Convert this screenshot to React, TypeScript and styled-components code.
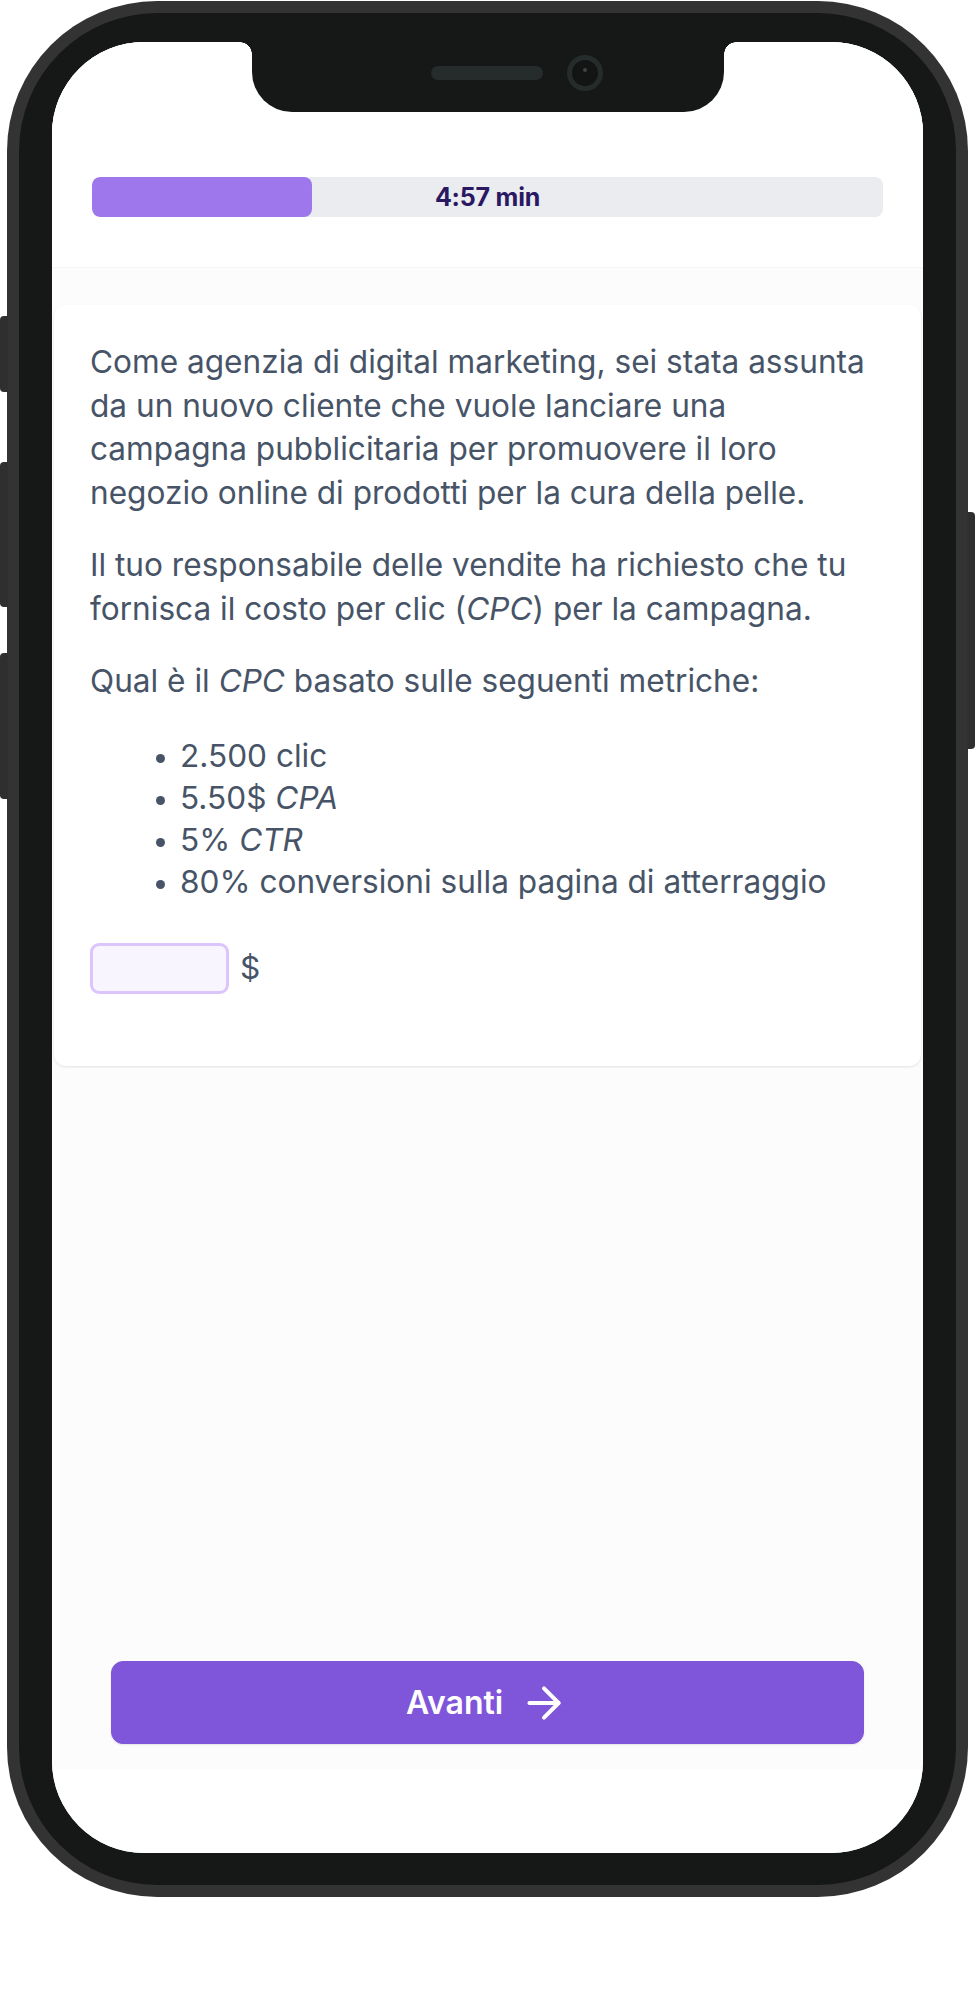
import React from 'react'
import styled, { createGlobalStyle } from 'styled-components'
import { ArrowRight } from 'lucide-react'

const GlobalStyle = createGlobalStyle`
  html, body {
    margin: 0;
    padding: 0;
    background: #ffffff;
  }
  body {
    font-family: Inter, 'Noto Sans', sans-serif;
    -webkit-font-smoothing: antialiased;
  }
  * {
    box-sizing: border-box;
  }
`

const metrics = [
  { value: '2.500 clic' },
  { value: '5.50$ ', unit: 'CPA' },
  { value: '5% ', unit: 'CTR' },
  { value: '80% conversioni sulla pagina di atterraggio' },
]

const elapsed = 0.278

const App = () => {
  return (
    <Stage>
      <GlobalStyle />
      <Phone>
        <SideButton side="left" top={316} length={76} />
        <SideButton side="left" top={462} length={145} />
        <SideButton side="left" top={653} length={146} />
        <SideButton side="right" top={512} length={237} />
        <Bezel>
          <Screen>
            <Notch>
              <Speaker />
              <Camera>
                <Lens />
              </Camera>
            </Notch>
            <AppView>
              <Header>
                <Progress>
                  <ProgressFill style={{ width: `${elapsed * 100}%` }} />
                  <ProgressLabel>4:57 min</ProgressLabel>
                </Progress>
              </Header>
              <Main>
                <Card>
                  <Paragraph>
                    Come agenzia di digital marketing, sei stata assunta da un
                    nuovo cliente che vuole lanciare una campagna pubblicitaria
                    per promuovere il loro negozio online di prodotti per la
                    cura della pelle.
                  </Paragraph>
                  <Paragraph>
                    Il tuo responsabile delle vendite ha richiesto che tu
                    fornisca il costo per clic (<em>CPC</em>) per la campagna.
                  </Paragraph>
                  <Paragraph $last>
                    Qual è il <em>CPC</em> basato sulle seguenti metriche:
                  </Paragraph>
                  <Metrics>
                    {metrics.map((m) => (
                      <li key={m.value}>
                        {m.value}
                        {m.unit && <em>{m.unit}</em>}
                      </li>
                    ))}
                  </Metrics>
                  <AnswerRow>
                    <AnswerInput type="text" aria-label="CPC" />
                    <Currency>$</Currency>
                  </AnswerRow>
                </Card>
              </Main>
              <Footer>
                <NextButton type="button">
                  Avanti
                  <ArrowRight size={50} strokeWidth={1.9} />
                </NextButton>
              </Footer>
            </AppView>
            <HomeArea />
          </Screen>
        </Bezel>
      </Phone>
    </Stage>
  )
}

export default App

const Stage = styled.div`
  width: 976px;
  height: 2004px;
  padding: 1px 0 0 7px;
  background: #ffffff;
`

const Phone = styled.div`
  position: relative;
  width: 961px;
  height: 1896px;
  padding: 12px;
  border-radius: 150px;
  background: #333333;
`

const SideButton = styled.div<{ side: 'left' | 'right'; top: number; length: number }>`
  position: absolute;
  top: ${({ top }) => top - 1}px;
  ${({ side }) => (side === 'left' ? 'left: -7px;' : 'right: -7px;')}
  width: 8px;
  height: ${({ length }) => length}px;
  border-radius: ${({ side }) => (side === 'left' ? '4px 0 0 4px' : '0 4px 4px 0')};
  background: #2f2f2f;
`

const Bezel = styled.div`
  height: 100%;
  padding: 29px 33px 32px;
  border-radius: 138px;
  background: #161817;
`

const Screen = styled.div`
  position: relative;
  display: flex;
  flex-direction: column;
  height: 100%;
  border-radius: 92px;
  overflow: hidden;
  background: #ffffff;
`

const Notch = styled.div`
  position: absolute;
  top: 0;
  left: 200px;
  z-index: 2;
  display: flex;
  align-items: center;
  gap: 24px;
  width: 472px;
  height: 70px;
  padding: 0 0 8px 179px;
  border-radius: 0 0 40px 40px;
  background: #161817;

  &::before,
  &::after {
    content: '';
    position: absolute;
    top: 0;
    width: 12px;
    height: 12px;
  }
  &::before {
    left: -12px;
    background: radial-gradient(circle at 0 100%, transparent 11.5px, #161817 12px);
  }
  &::after {
    right: -12px;
    background: radial-gradient(circle at 100% 100%, transparent 11.5px, #161817 12px);
  }
`

const Speaker = styled.div`
  width: 112px;
  height: 14px;
  border-radius: 7px;
  background: #262b2b;
`

const Camera = styled.div`
  display: flex;
  justify-content: center;
  width: 36px;
  height: 36px;
  padding-top: 8px;
  border: 5px solid #262b2b;
  border-radius: 50%;
  background: #131515;
`

const Lens = styled.div`
  width: 4px;
  height: 4px;
  border-radius: 50%;
  background: #3c4444;
`

const AppView = styled.div`
  display: flex;
  flex-direction: column;
  height: 1727px;
  background: #fcfcfd;
`

const Header = styled.div`
  padding: 135px 40px 50px;
  background: #ffffff;
  border-bottom: 1px solid #f2f4f7;
`

const Progress = styled.div`
  display: grid;
  height: 40px;
  border-radius: 8px;
  overflow: hidden;
  background: #eaecf0;
`

const ProgressFill = styled.div`
  grid-area: 1 / 1;
  justify-self: start;
  height: 100%;
  border-radius: 8px;
  background: #9e77ed;
`

const ProgressLabel = styled.span`
  grid-area: 1 / 1;
  align-self: center;
  justify-self: center;
  font-size: 25px;
  font-weight: 700;
  letter-spacing: -0.2px;
  color: #2a1862;
`

const Main = styled.div`
  flex: 1;
  padding: 37px 2px 0;
`

const Card = styled.div`
  padding: 35px 36px 72px;
  border-radius: 12px;
  background: #ffffff;
  box-shadow: 0 1px 3px rgba(16, 24, 40, 0.08), 0 1px 2px rgba(16, 24, 40, 0.04);
  color: #475467;
  font-size: 31.6px;
  line-height: 43.5px;
`

const Paragraph = styled.p<{ $last?: boolean }>`
  margin: 0 0 ${({ $last }) => ($last ? 32 : 29)}px;
`

const Metrics = styled.ul`
  margin: 0 0 40px;
  padding-left: 90px;
  line-height: 42px;

  li::marker {
    font-size: 27px;
  }
`

const AnswerRow = styled.div`
  display: flex;
  align-items: center;
  gap: 11px;
`

const AnswerInput = styled.input`
  width: 139px;
  height: 51px;
  border: 3px solid #dcc4fc;
  border-radius: 9px;
  background: #f9f5ff;
  outline: none;
`

const Currency = styled.span`
  font-size: 31.6px;
  color: #475467;
`

const Footer = styled.div`
  padding: 0 59px 25px;
`

const NextButton = styled.button`
  display: flex;
  align-items: center;
  justify-content: center;
  gap: 16px;
  width: 100%;
  height: 83px;
  border: 1px solid #7f56d9;
  border-radius: 12px;
  background: #7f56d9;
  box-shadow: 0 1px 2px rgba(16, 24, 40, 0.1);
  color: #ffffff;
  font-family: Inter, sans-serif;
  font-size: 32px;
  font-weight: 600;
  cursor: pointer;
`

const HomeArea = styled.div`
  flex: 1;
  background: #ffffff;
`
